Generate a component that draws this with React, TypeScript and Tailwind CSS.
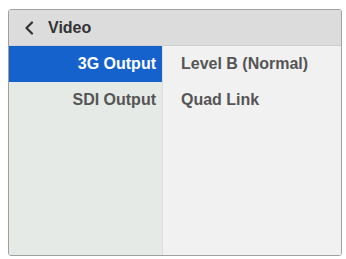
export default function App() {
  return (
    <div className="w-[346px] h-[259px] bg-white pt-[9px] pl-[8px] pr-[4px] pb-[3px]" style={{ fontFamily: '"Liberation Sans", Arial, sans-serif' }}>
      <div className="flex flex-col h-full border border-[#a0a0a0] rounded-[3px] overflow-hidden">
        <div className="h-[36px] bg-[#dcdcdc] flex items-center pl-[15px] gap-[14px] text-[#333] border-b border-[#cfcfcf]">
          <svg width="10" height="14" viewBox="0 0 10 14" className="mt-[1px]">
            <path d="M8 1.5 L2.5 7 L8 12.5" fill="none" stroke="#333" strokeWidth="2.2" strokeLinecap="round" strokeLinejoin="round" />
          </svg>
          <span className="text-[16px] font-bold">Video</span>
        </div>
        <div className="flex flex-1">
          <div className="w-[154px] bg-[#e5eae6] border-r border-[#dcdfdc] flex flex-col">
            <div className="h-[36px] bg-[#1562cc] text-white text-[16px] font-bold flex items-center justify-end pr-[6px]">3G Output</div>
            <div className="h-[36px] text-[#555] text-[16px] font-bold flex items-center justify-end pr-[6px]">SDI Output</div>
          </div>
          <div className="flex-1 bg-[#f1f1f1] flex flex-col">
            <div className="h-[36px] text-[#555] text-[16px] font-bold flex items-center pl-[18px]">Level B (Normal)</div>
            <div className="h-[36px] text-[#555] text-[16px] font-bold flex items-center pl-[18px]">Quad Link</div>
          </div>
        </div>
      </div>
    </div>
  );
}
